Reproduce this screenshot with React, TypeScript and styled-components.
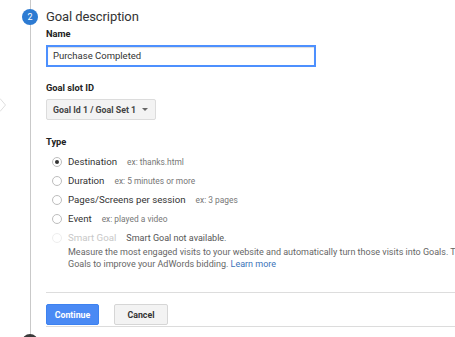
import React from "react";
import styled, { createGlobalStyle } from "styled-components";

const Global = createGlobalStyle`
  html, body { margin: 0; padding: 0; background: #fff; }
  body { font-family: Roboto, "Liberation Sans", Arial, sans-serif; overflow: hidden; }
`;

const Page = styled.div`
  position: relative;
  width: 455px;
  height: 337px;
  overflow: hidden;
  display: grid;
  grid-template-columns: 46px 1fr;
`;

const Rail = styled.div`
  position: relative;
  &::before {
    content: "";
    position: absolute;
    left: 30px;
    top: 0;
    bottom: 0;
    width: 1px;
    background: #c9c9c9;
  }
`;

const StepBadge = styled.div<{ $active?: boolean }>`
  position: absolute;
  left: 22px;
  width: 16px;
  height: 16px;
  border-radius: 50%;
  background: ${(p) => (p.$active ? "#2d7bd2" : "#3a3a3a")};
  color: #fff;
  font-size: 9px;
  line-height: 16px;
  text-align: center;
`;

const Pointer = styled.svg`
  position: absolute;
  left: 0;
  top: 98px;
`;

const Content = styled.div`
  display: flex;
  flex-direction: column;
  padding-top: 8px;
  border-bottom: 1px solid #dcdcdc;
  height: 327px;
  box-sizing: border-box;
  min-width: 0;
`;

const Title = styled.div`
  font-size: 13px;
  line-height: 17px;
  color: #333;
  letter-spacing: -0.1px;
`;

const Label = styled.div<{ $mt: number }>`
  margin-top: ${(p) => p.$mt}px;
  font-size: 9.3px;
  line-height: 12px;
  font-weight: 700;
  color: #222;
`;

const Input = styled.div`
  margin-top: 5px;
  width: 270px;
  height: 22px;
  box-sizing: border-box;
  border: 2px solid #4d90fe;
  box-shadow: inset 0 1px 1px #ddd;
  padding-left: 5px;
  font-size: 9.5px;
  line-height: 18px;
  color: #333;
`;

const Select = styled.div`
  margin-top: 5px;
  width: 110px;
  height: 21px;
  box-sizing: border-box;
  border: 1px solid #dcdcdc;
  border-radius: 2px;
  background: #f3f3f3;
  display: flex;
  align-items: center;
  justify-content: space-between;
  padding: 0 7px 0 6px;
  font-size: 8.8px;
  font-weight: 700;
  color: #444;
  white-space: nowrap;
`;

const Caret = styled.span`
  width: 0;
  height: 0;
  border-left: 3px solid transparent;
  border-right: 3px solid transparent;
  border-top: 3px solid #666;
`;

const RadioList = styled.div`
  margin-top: 4px;
  display: flex;
  flex-direction: column;
`;

const RadioRow = styled.div`
  height: 19px;
  display: flex;
  align-items: center;
  padding-left: 6px;
  white-space: nowrap;
`;

const Circle = styled.span<{ $checked?: boolean; $disabled?: boolean }>`
  width: 10px;
  height: 10px;
  box-sizing: border-box;
  border-radius: 50%;
  border: 1px solid ${(p) => (p.$disabled ? "#eee" : "#bdbdbd")};
  background: #fff;
  display: flex;
  align-items: center;
  justify-content: center;
  margin-right: 6px;
  &::after {
    content: "";
    display: ${(p) => (p.$checked ? "block" : "none")};
    width: 4px;
    height: 4px;
    border-radius: 50%;
    background: #333;
  }
`;

const RadioLabel = styled.span<{ $disabled?: boolean }>`
  font-size: 9.7px;
  color: ${(p) => (p.$disabled ? "#c8c8c8" : "#333")};
`;

const Hint = styled.span<{ $dark?: boolean }>`
  margin-left: 10px;
  font-size: ${(p) => (p.$dark ? 9 : 8.4)}px;
  color: ${(p) => (p.$dark ? "#555" : "#777")};
`;

const Description = styled.div`
  margin-left: 22px;
  font-size: 9px;
  line-height: 11.7px;
  color: #666;
  white-space: nowrap;
  overflow: hidden;
`;

const Link = styled.a`
  color: #3b73b9;
  text-decoration: none;
`;

const Divider = styled.div`
  margin-top: 22px;
  height: 1px;
  background: #ddd;
`;

const Buttons = styled.div`
  margin-top: 11px;
  display: flex;
  gap: 15px;
`;

const Button = styled.button<{ $primary?: boolean }>`
  height: 21px;
  width: ${(p) => (p.$primary ? 53 : 54)}px;
  box-sizing: border-box;
  border-radius: 2px;
  border: 1px solid ${(p) => (p.$primary ? "#3d82f0" : "#d6d6d6")};
  background: ${(p) => (p.$primary ? "#4a8af4" : "#f3f3f3")};
  color: ${(p) => (p.$primary ? "#fff" : "#333")};
  font-family: Roboto, "Liberation Sans", Arial, sans-serif;
  font-size: 8.8px;
  font-weight: 700;
  padding: 0;
`;

const options = [
  { label: "Destination", hint: "ex: thanks.html", checked: true },
  { label: "Duration", hint: "ex: 5 minutes or more" },
  { label: "Pages/Screens per session", hint: "ex: 3 pages" },
  { label: "Event", hint: "ex: played a video" },
];

export default function App() {
  return (
    <>
      <Global />
      <Page>
        <Rail>
          <StepBadge $active style={{ top: 9 }}>2</StepBadge>
          <StepBadge style={{ top: 334 }} />
          <Pointer width="6" height="14" viewBox="0 0 6 14">
            <path d="M0 0.5 L5.5 7 L0 13.5" fill="#fff" stroke="#dedede" strokeWidth="1" />
          </Pointer>
        </Rail>
        <Content>
          <Title>Goal description</Title>
          <Label $mt={3}>Name</Label>
          <Input>Purchase Completed</Input>
          <Label $mt={15}>Goal slot ID</Label>
          <Select>
            <span>Goal Id 1 / Goal Set 1</span>
            <Caret />
          </Select>
          <Label $mt={16}>Type</Label>
          <RadioList>
            {options.map((o) => (
              <RadioRow key={o.label}>
                <Circle $checked={o.checked} />
                <RadioLabel>{o.label}</RadioLabel>
                <Hint>{o.hint}</Hint>
              </RadioRow>
            ))}
            <RadioRow>
              <Circle $disabled />
              <RadioLabel $disabled>Smart Goal</RadioLabel>
              <Hint $dark>Smart Goal not available.</Hint>
            </RadioRow>
          </RadioList>
          <Description>
            Measure the most engaged visits to your website and automatically turn those visits into Goals. Then use those
            <br />
            Goals to improve your AdWords bidding. <Link href="#">Learn more</Link>
          </Description>
          <Divider />
          <Buttons>
            <Button $primary>Continue</Button>
            <Button>Cancel</Button>
          </Buttons>
        </Content>
      </Page>
    </>
  );
}
